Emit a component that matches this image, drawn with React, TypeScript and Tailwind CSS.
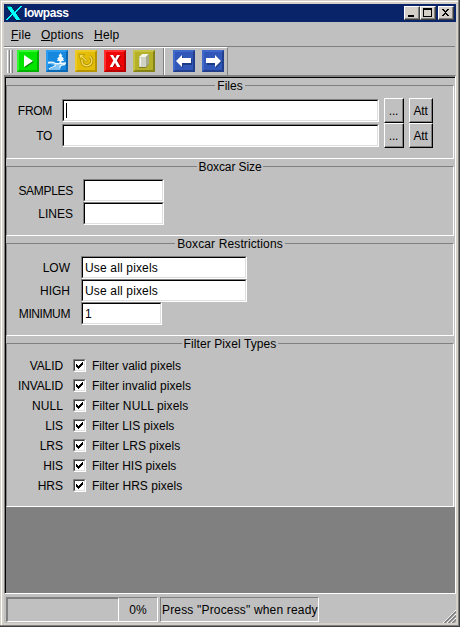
import React from "react";

const sunken =
  "border border-t-[#808080] border-l-[#808080] border-r-white border-b-white";

function Group({
  title,
  gap,
  tracking = "",
  className,
  children,
}: {
  title: string;
  gap: string;
  tracking?: string;
  className: string;
  children: React.ReactNode;
}) {
  return (
    <section className={`flex w-[448px] flex-col ${className}`}>
      <div className="flex h-[15px] shrink-0 items-start">
        <div className="mt-[7px] h-[8px] flex-1 border-t border-l border-[#808080]" />
        <h2 className={`${gap} shrink-0 pt-px text-center leading-[15px] whitespace-nowrap ${tracking}`}>{title}</h2>
        <div className="mt-[7px] h-[8px] flex-1 border-t border-r border-t-[#808080] border-r-white" />
      </div>
      <div className="flex-1 border-r border-b border-l border-r-white border-b-white border-l-[#808080]">
        {children}
      </div>
    </section>
  );
}

function Field({ width, value = "", caret = false }: { width: string; value?: string; caret?: boolean }) {
  return (
    <div className={`h-[23px] shrink-0 ${width} ${sunken}`}>
      <div className="flex h-full items-center border border-t-black border-l-black border-r-[#dfdfdf] border-b-[#dfdfdf] bg-white pl-[2px]">
        {caret && <span className="h-[15px] w-px bg-black" />}
        <span className="pt-[2px] tracking-[0.16px]">{value}</span>
      </div>
    </div>
  );
}

function Raised({ className, children }: { className: string; children: React.ReactNode }) {
  return (
    <button className={`h-[25px] shrink-0 border border-t-white border-l-white border-r-black border-b-black ${className}`}>
      <span className="flex h-full items-center justify-center border-r border-b border-[#808080] pt-[2px] tracking-[-0.2px]">{children}</span>
    </button>
  );
}

function Label({ width, children }: { width: string; children: React.ReactNode }) {
  return <label className={`shrink-0 pt-[2px] text-right ${width}`}>{children}</label>;
}

function CheckRow({ name, text, track, nameTrack }: { name: string; text: string; track: string; nameTrack: string }) {
  return (
    <div className="flex h-5 items-center">
      <Label width="w-[56px]"><span className={nameTrack}>{name}</span></Label>
      <span className={`ml-[10px] h-[13px] w-[13px] ${sunken}`}>
        <span className="block h-[11px] w-[11px] border border-t-[#404040] border-l-[#404040] border-r-[#dfdfdf] border-b-[#dfdfdf] bg-white">
          <svg width="9" height="9" viewBox="0 0 9 9" shapeRendering="crispEdges">
            <path d="M1 3h1v1h1v1h1V4h1V3h1V2h1V1h1v3H7v1H6v1H5v1H4v1H3V7H2V6H1z" />
          </svg>
        </span>
      </span>
      <span className={`ml-[6px] pt-[2px] whitespace-nowrap ${track}`}>{text}</span>
    </div>
  );
}

function Tile({ face, light, dark, children }: { face: string; light: string; dark: string; children: React.ReactNode }) {
  return (
    <svg width="22" height="22" viewBox="0 0 22 22" className="shrink-0">
      <rect width="22" height="22" fill={face} />
      <path d="M0 0h22l-2 2H2v18l-2 2z" fill={light} />
      <path d="M22 0v22H0l2-2h18V2z" fill={dark} />
      {children}
    </svg>
  );
}

function Toolbar() {
  return (
    <div className="flex h-[28px] w-[224px] shrink-0 items-start border-t border-r border-t-white border-r-[#808080]">
      <div className="mt-[2px] ml-[3px] flex h-[23px] w-[6px] shrink-0">
        <div className="w-[3px] border-l border-r border-l-white border-r-[#808080]" />
        <div className="w-[3px] border-l border-r border-l-white border-r-[#808080]" />
      </div>
      <div className="mt-[2px] ml-1 flex gap-[7px]">
        <Tile face="#00e400" light="#35f535" dark="#00b000">
          <path d="M8 6v12l9-6z" fill="#008a00" />
          <path d="M7 5v12l9-6z" fill="#fff" />
        </Tile>
        <Tile face="#1688dd" light="#2b9cf0" dark="#0868b4">
          <path d="M14.5 3l2 3h-1l2.500 3h-1l1 2h-2.500v2h-2v-2H11l1-2h-1l2.500-3h-1z" fill="#f2faff" />
          <path d="M2 12.500c3-1 6-.5 7.500.8 2 1.200 6 0 10.500-.3v1.500c-3 .2-5 .8-6 2-1.200 1.500-.5 2.500.5 3.500H3c1-2 6-2 6-4 0-1.500-4-1.700-7-2z" fill="#7fc4f2" />
          <path d="M2 12.500c4-1 6 0 7.500 1 1.500.8 6-.3 10.500-.5M3 19c2-2 7-2 6.500-4.500M19 14.500c-4 .3-6 1.500-5 4" fill="none" stroke="#eef8ff" strokeWidth="1.300" />
        </Tile>
        <Tile face="#e3bd08" light="#edca28" dark="#b79500">
          <path d="M7 9.500a5 5 0 1 0 7.500-3" fill="none" stroke="#a88900" strokeWidth="3.200" />
          <path d="M7 9.500a5 5 0 1 0 7.500-3" fill="none" stroke="#f5dc55" strokeWidth="1.600" />
          <path d="M4 4.500h5.500L8 6.300l4.500 4.500-1.200 1.200-4.600-4.400L5 9z" fill="#f5dc55" stroke="#a88900" strokeWidth=".7" />
        </Tile>
        <Tile face="#ee0505" light="#ff3131" dark="#b90000">
          <path d="M8 6h3l2 3 2-3h2l-3 5 4 6h-3l-3-4-2 4H8l4-6z" fill="#9b0000" />
          <path d="M6 5h3l2.2 3.6L13 5h3l-3.2 5.5L16.5 17h-3.3L11 12.8 8.700 17h-3l3.600-6.500z" fill="#fff" />
        </Tile>
        <Tile face="#b4b129" light="#c6c243" dark="#858217">
          <path d="M6 7l3-3h7v10l-3 4H6z" fill="#7e7c25" />
          <path d="M6 7h7v10H6z" fill="#d0d2c3" />
          <path d="M6 7l3-3h7l-3 3z" fill="#f4f5e9" />
          <path d="M13 7l3-3v10l-3 3z" fill="#a7aa91" />
          <path d="M7 8h1v8H7z" fill="#f4f5e9" />
        </Tile>
      </div>
      <div className="ml-[8px] h-[27px] w-[2px] shrink-0 border-r border-l border-l-[#808080] border-r-white" />
      <div className="mt-[2px] ml-[8px] flex gap-[7px]">
        <Tile face="#3157b8" light="#4169cb" dark="#213e8d">
          <path d="M4 12l6-6v3h9v6h-9v3z" fill="#1b3b87" />
          <path d="M3 11l6-6v3h9v5H9v4z" fill="#fff" />
        </Tile>
        <Tile face="#3157b8" light="#4169cb" dark="#213e8d">
          <path d="M20 12l-6-6v3H5v6h9v3z" fill="#1b3b87" />
          <path d="M19 11l-6-6v3H4v5h9v4z" fill="#fff" />
        </Tile>
      </div>
    </div>
  );
}

function WindowButton({ icon }: { icon: string }) {
  return (
    <button className="h-[14px] w-[16px] border border-t-white border-l-white border-r-[#404040] border-b-[#404040] bg-[#d4d0c8]">
      <span className="block h-[12px] w-[14px] border-r border-b border-[#808080]">
        <svg width="13" height="11" viewBox="0 0 13 11" shapeRendering="crispEdges">
          <path d={icon} fillRule="evenodd" />
        </svg>
      </span>
    </button>
  );
}

const checks = [
  ["VALID", "Filter valid pixels", "tracking-[0.02px]", "tracking-[-0.1px]"],
  ["INVALID", "Filter invalid pixels", "tracking-[0.05px]", "tracking-[-0.1px]"],
  ["NULL", "Filter NULL pixels", "tracking-[0.12px]", "tracking-[0.1px]"],
  ["LIS", "Filter LIS pixels", "tracking-[0.02px]", "tracking-[-0.1px]"],
  ["LRS", "Filter LRS pixels", "tracking-[0.06px]", "tracking-[0px]"],
  ["HIS", "Filter HIS pixels", "tracking-[0.02px]", "tracking-[-0.1px]"],
  ["HRS", "Filter HRS pixels", "tracking-[0.06px]", "tracking-[0px]"],
];

export default function App() {
  return (
    <main className="h-[627px] w-[460px] border-r border-b border-[#404040] bg-[#d4d0c8] font-['Liberation_Sans',Arial,sans-serif] text-[12px] leading-[15px] text-black">
      <div className="h-[626px] w-[459px] border-r border-b border-[#808080] pt-px pl-px">
        <div className="h-[624px] w-[457px] border-t border-l border-white pt-[2px] pl-[2px]">
          <div className="flex h-[619px] w-[452px] flex-col bg-[#c0c0c0]">
            <header className="flex h-[18px] shrink-0 items-center bg-[#0a246a]">
              <svg width="18" height="16" viewBox="0 0 18 16" className="ml-px" shapeRendering="crispEdges">
                <path d="M1 1h5l10 14h-5z" fill="#00ffff" stroke="#000" strokeWidth=".5" />
                <path d="M15 1h2L10 8 9 7zM7 9l1 1-6 5H0z" fill="#00ffff" />
              </svg>
              <h1 className="ml-px flex-1 text-[12px] leading-[16px] font-bold tracking-[-0.4px] text-white">lowpass</h1>
              <div className="mr-[2px] flex">
                <WindowButton icon="M3 8h6v2H3z" />
                <WindowButton icon="M2 1h9v9H2zM3 3v6h7V3z" />
                <span className="w-[2px]" />
                <WindowButton icon="M3 2h2v1h1v1h1V3h1V2h2v1H9v1H8v1H7v1h1v1h1v1h1v1H8V8H7V7H6v1H5v1H3V8h1V7h1V6h1V5H5V4H4V3H3z" />
              </div>
            </header>
            <nav className="flex h-[25px] w-[451px] shrink-0 items-center border-b border-[#808080] pt-[2px] pl-[7px]">
              <span className="w-[30px] tracking-[0.2px]"><u>F</u>ile</span>
              <span className="w-[53px] tracking-[0.2px]"><u>O</u>ptions</span>
              <span className="tracking-[0.2px]"><u>H</u>elp</span>
            </nav>
            <Toolbar />
            <div className="h-[519px] w-[452px] shrink-0 border-t-2 border-r border-b border-l border-t-[#808080] border-r-white border-b-white border-l-[#808080]">
              <div className="h-[516px] w-[450px] border-t border-l border-black bg-[#808080]">
                <div className="w-[449px] bg-[#c0c0c0]">
                  <Group title="Files" gap="w-[30px]" className="h-[81px]">
                    <div className="mt-[5px] flex h-[25px] items-center">
                      <Label width="w-[45px]"><span className="tracking-[-0.3px]">FROM</span></Label>
                      <div className="ml-[10px] flex items-center">
                        <Field width="w-[317px]" caret />
                        <Raised className="ml-[5px] w-5">...</Raised>
                        <Raised className="ml-[5px] w-6">Att</Raised>
                      </div>
                    </div>
                    <div className="flex h-[25px] items-center">
                      <Label width="w-[45px]"><span className="tracking-[-0.3px]">TO</span></Label>
                      <div className="ml-[10px] flex items-center">
                        <Field width="w-[317px]" />
                        <Raised className="ml-[5px] w-5">...</Raised>
                        <Raised className="ml-[5px] w-6">Att</Raised>
                      </div>
                    </div>
                  </Group>
                  <Group title="Boxcar Size" gap="w-[66px]" tracking="tracking-[-0.1px]" className="h-[77px]">
                    <div className="mt-[5px] flex items-center">
                      <Label width="w-[66px]"><span className="tracking-[-0.3px]">SAMPLES</span></Label>
                      <span className="w-[10px]" />
                      <Field width="w-[81px]" />
                    </div>
                    <div className="flex items-center">
                      <Label width="w-[66px]">LINES</Label>
                      <span className="w-[10px]" />
                      <Field width="w-[81px]" />
                    </div>
                  </Group>
                  <Group title="Boxcar Restrictions" gap="w-[110px]" tracking="tracking-[0.12px]" className="h-[100px]">
                    <div className="mt-[5px] flex items-center">
                      <Label width="w-[63px]">LOW</Label>
                      <span className="w-[11px]" />
                      <Field width="w-[166px]" value="Use all pixels" />
                    </div>
                    <div className="flex items-center">
                      <Label width="w-[63px]">HIGH</Label>
                      <span className="w-[11px]" />
                      <Field width="w-[166px]" value="Use all pixels" />
                    </div>
                    <div className="flex items-center">
                      <Label width="w-[63px]"><span className="tracking-[-0.4px]">MINIMUM</span></Label>
                      <span className="w-[11px]" />
                      <Field width="w-[81px]" value="1" />
                    </div>
                  </Group>
                  <Group title="Filter Pixel Types" gap="w-[96px]" tracking="tracking-[0.1px]" className="h-[171px]">
                    <div className="pt-[4px]">
                      {checks.map(([name, text, track, nameTrack]) => (
                        <CheckRow key={name} name={name} text={text} track={track} nameTrack={nameTrack} />
                      ))}
                    </div>
                  </Group>
                </div>
              </div>
            </div>
            <footer className="flex h-[29px] shrink-0 items-start pt-[3px] pl-[2px]">
              <div className="h-[25px] w-[113px] border-t-2 border-r border-b border-l-2 border-t-[#808080] border-r-white border-b-white border-l-[#808080]" />
              <div className="flex h-[25px] w-[39px] items-center justify-center border-t border-r border-b border-t-[#808080] border-r-white border-b-white pt-[2px]">0%</div>
              <div className={`ml-[2px] flex h-[25px] w-[159px] items-center pt-[2px] pl-px tracking-[0.17px] whitespace-nowrap ${sunken}`}>
                Press "Process" when ready
              </div>
              <svg width="13" height="13" viewBox="0 0 13 13" className="mt-[13px] ml-auto">
                <path d="M0 13L13 0M4 13l9-9M8 13l5-5" stroke="#fff" strokeWidth="1" />
                <path d="M1.5 13L13 1.5M5.5 13L13 5.5M9.5 13L13 9.5" stroke="#808080" strokeWidth="1.6" />
              </svg>
            </footer>
          </div>
        </div>
      </div>
    </main>
  );
}
